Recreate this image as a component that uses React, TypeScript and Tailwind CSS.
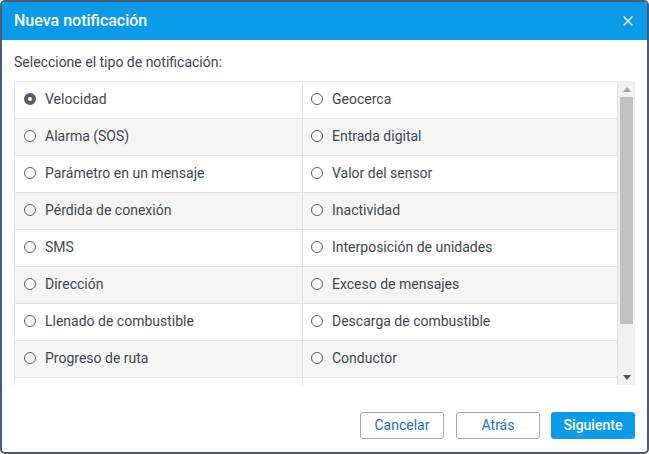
import { X } from 'lucide-react'

const rows: [string, string][] = [
  ['Velocidad', 'Geocerca'],
  ['Alarma (SOS)', 'Entrada digital'],
  ['Parámetro en un mensaje', 'Valor del sensor'],
  ['Pérdida de conexión', 'Inactividad'],
  ['SMS', 'Interposición de unidades'],
  ['Dirección', 'Exceso de mensajes'],
  ['Llenado de combustible', 'Descarga de combustible'],
  ['Progreso de ruta', 'Conductor'],
  ['', ''],
]

function Radio({ checked }: { checked?: boolean }) {
  return (
    <span
      className={
        checked
          ? 'w-[12px] h-[12px] rounded-full border-[4px] border-[#555b66] bg-white shrink-0'
          : 'w-[12px] h-[12px] rounded-full border border-[#555b66] bg-white shrink-0'
      }
    />
  )
}

export default function App() {
  return (
    <div
      className="w-[649px] h-[454px] bg-white border-2 border-[#4b5a76] rounded-[5px] overflow-hidden flex flex-col text-[#41464f]"
      style={{ fontFamily: 'Roboto, "Liberation Sans", sans-serif' }}
    >
      <div className="h-[38px] bg-[#0a9be8] flex items-center justify-between pl-3 pr-[11px] shrink-0">
        <span className="text-white text-[16px] font-medium">Nueva notificación</span>
        <X className="w-[16px] h-[16px] text-white" strokeWidth={2.25} />
      </div>

      <div className="flex-1 flex flex-col px-3 pt-[12px]">
        <div className="h-[20px] leading-[20px] text-[14px] mb-[9px]">
          Seleccione el tipo de notificación:
        </div>

        <div className="flex h-[304px]">
          <div className="flex-1 overflow-hidden border-l border-t border-r border-[#e3e3e3] rounded-tl-[3px] rounded-tr-[3px]">
            {rows.map(([a, b], i) => (
              <div
                key={i}
                className={`grid grid-cols-[288px_1fr] h-[37px] border-b border-[#e3e3e3] ${
                  i % 2 === 1 ? 'bg-[#f5f5f5]' : 'bg-white'
                }`}
              >
                <div className="flex items-center gap-[9px] pl-[9px] pb-[2px] border-r border-[#e3e3e3] text-[14px]">
                  {a && <Radio checked={i === 0} />}
                  <span>{a}</span>
                </div>
                <div className="flex items-center gap-[9px] pl-[8px] pb-[2px] text-[14px]">
                  {b && <Radio />}
                  <span>{b}</span>
                </div>
              </div>
            ))}
          </div>
          <div className="w-[17px] bg-[#f1f1f1] flex flex-col items-center shrink-0">
            <div className="h-[16px] flex items-center justify-center">
              <svg width="8" height="5" viewBox="0 0 8 5">
                <path d="M0 5 L4 0 L8 5 Z" fill="#a3a3a3" />
              </svg>
            </div>
            <div className="w-[13px] h-[227px] bg-[#c1c1c1]" />
            <div className="flex-1" />
            <div className="h-[16px] flex items-center justify-center">
              <svg width="8" height="5" viewBox="0 0 8 5">
                <path d="M0 0 L8 0 L4 5 Z" fill="#505050" />
              </svg>
            </div>
          </div>
        </div>

        <div className="flex justify-end gap-[11px] mt-[27px]">
          <button className="w-[84px] h-[27px] border border-[#a9a9a9] rounded-[3px] text-[14px] text-[#1f6fb8] bg-white">
            Cancelar
          </button>
          <button className="w-[84px] h-[27px] border border-[#a9a9a9] rounded-[3px] text-[14px] text-[#1f6fb8] bg-white ml-px">
            Atrás
          </button>
          <button className="w-[84px] h-[27px] rounded-[3px] text-[14px] font-medium text-white bg-[#0a9be8]">
            Siguiente
          </button>
        </div>
      </div>
    </div>
  )
}
